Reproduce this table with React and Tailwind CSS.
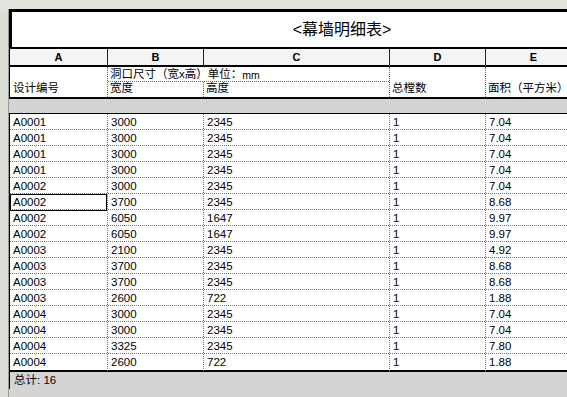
const rows = [
  ["A0001", "3000", "2345", "1", "7.04"],
  ["A0001", "3000", "2345", "1", "7.04"],
  ["A0001", "3000", "2345", "1", "7.04"],
  ["A0001", "3000", "2345", "1", "7.04"],
  ["A0002", "3000", "2345", "1", "7.04"],
  ["A0002", "3700", "2345", "1", "8.68"],
  ["A0002", "6050", "1647", "1", "9.97"],
  ["A0002", "6050", "1647", "1", "9.97"],
  ["A0003", "2100", "2345", "1", "4.92"],
  ["A0003", "3700", "2345", "1", "8.68"],
  ["A0003", "3700", "2345", "1", "8.68"],
  ["A0003", "2600", "722", "1", "1.88"],
  ["A0004", "3000", "2345", "1", "7.04"],
  ["A0004", "3000", "2345", "1", "7.04"],
  ["A0004", "3325", "2345", "1", "7.80"],
  ["A0004", "2600", "722", "1", "1.88"],
];

const cols = "grid grid-cols-[98px_96px_186px_96px_96px_94px]";
const font = { fontFamily: '"Liberation Sans", "Noto Sans CJK SC", sans-serif' };

export default function App() {
  return (
    <div className="w-[567px] h-[397px] overflow-hidden bg-[#e2e5dd] flex flex-col text-black" style={font}>
      {/* top strip */}
      <div className="h-[9px] shrink-0 bg-[#e2e5dd]" />

      <div className="flex flex-1 min-h-0">
        {/* left panel edge */}
        <div className="w-[9px] shrink-0 bg-[#dcdfd8] border-r border-[#9a9a9a]" />

        {/* schedule */}
        <div className="flex-1 min-w-0 bg-[#d4d4d4] overflow-hidden">
          <div className="w-[666px] bg-white">
            {/* title */}
            <div className="h-[40px] border-[3px] border-b-2 border-black flex items-center justify-center text-[16px]">
              &lt;幕墙明细表&gt;
            </div>

            {/* column letters */}
            <div className={`${cols} h-[18px] bg-[#f4f4f4] border-b-2 border-black border-l border-l-black text-[11px] font-bold`}>
              {["A", "B", "C", "D", "E", "F"].map((l) => (
                <div key={l} className="border-r border-[#222] flex items-center justify-center">
                  {l === "F" ? "" : l}
                </div>
              ))}
            </div>

            {/* field headers */}
            <div className={`${cols} h-[32px] border-b-2 border-black border-l border-l-black text-[11.5px] leading-none`}>
              <div className="border-r border-dotted border-[#666] flex items-end pl-[3px] pb-[3px]">设计编号</div>
              <div className="col-span-2 flex flex-col border-r border-dotted border-[#666]">
                <div className="h-[15px] border-b border-dotted border-[#666] flex items-end pl-[2px] pb-[1px]">
                  洞口尺寸（宽x高）单位：<span className="text-[10.5px]">mm</span>
                </div>
                <div className="grid grid-cols-[96px_186px] flex-1">
                  <div className="border-r border-dotted border-[#666] flex items-end pl-[2px] pb-[3px]">宽度</div>
                  <div className="flex items-end pl-[2px] pb-[3px]">高度</div>
                </div>
              </div>
              <div className="border-r border-dotted border-[#666] flex items-end pl-[2px] pb-[3px]">总樘数</div>
              <div className="border-r border-dotted border-[#666] flex items-end pl-[2px] pb-[3px]">面积（平方米）</div>
              <div />
            </div>

            {/* grouping band */}
            <div className="h-[15px] bg-[#d4d4d4] border-b border-black" />

            {/* data */}
            <div className="border-l border-black border-b-2 border-b-black">
              {rows.map((r, i) => (
                <div
                  key={i}
                  className={`${cols} h-[16px] text-[11.5px] ${i < rows.length - 1 ? "border-b border-dotted border-[#777]" : ""}`}
                >
                  {r.map((c, j) => (
                    <div
                      key={j}
                      className={`border-r border-dotted border-[#777] pl-[3px] flex items-center ${
                        i === 5 && j === 0 ? "ring-1 ring-inset ring-black" : ""
                      }`}
                    >
                      {c}
                    </div>
                  ))}
                  <div />
                </div>
              ))}
            </div>
          </div>

          {/* total */}
          <div className="h-[17px] pl-[4px] flex items-center text-[11.5px] border-l border-black w-fit pr-2">总计: 16</div>
        </div>
      </div>
    </div>
  );
}
